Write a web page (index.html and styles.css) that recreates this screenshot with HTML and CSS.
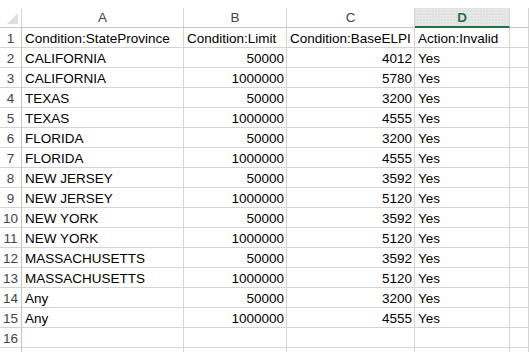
FILE: index.html
```html
<!DOCTYPE html>
<html>
<head>
    <title>Rules sheet</title>
    <link rel="stylesheet" href="styles.css">
</head>
<body>
    <div class="sheet">
        <div class="corner"></div>
        <div class="colHead">A</div>
        <div class="colHead">B</div>
        <div class="colHead">C</div>
        <div class="colHead selected">D</div>
        <div class="colHead"></div>

        <div class="rowHead">1</div>
        <div class="cell">Condition:StateProvince</div>
        <div class="cell">Condition:Limit</div>
        <div class="cell">Condition:BaseELPI</div>
        <div class="cell">Action:Invalid</div>
        <div class="cell"></div>

        <div class="rowHead">2</div>
        <div class="cell">CALIFORNIA</div>
        <div class="cell num">50000</div>
        <div class="cell num">4012</div>
        <div class="cell">Yes</div>
        <div class="cell"></div>

        <div class="rowHead">3</div>
        <div class="cell">CALIFORNIA</div>
        <div class="cell num">1000000</div>
        <div class="cell num">5780</div>
        <div class="cell">Yes</div>
        <div class="cell"></div>

        <div class="rowHead">4</div>
        <div class="cell">TEXAS</div>
        <div class="cell num">50000</div>
        <div class="cell num">3200</div>
        <div class="cell">Yes</div>
        <div class="cell"></div>

        <div class="rowHead">5</div>
        <div class="cell">TEXAS</div>
        <div class="cell num">1000000</div>
        <div class="cell num">4555</div>
        <div class="cell">Yes</div>
        <div class="cell"></div>

        <div class="rowHead">6</div>
        <div class="cell">FLORIDA</div>
        <div class="cell num">50000</div>
        <div class="cell num">3200</div>
        <div class="cell">Yes</div>
        <div class="cell"></div>

        <div class="rowHead">7</div>
        <div class="cell">FLORIDA</div>
        <div class="cell num">1000000</div>
        <div class="cell num">4555</div>
        <div class="cell">Yes</div>
        <div class="cell"></div>

        <div class="rowHead">8</div>
        <div class="cell">NEW JERSEY</div>
        <div class="cell num">50000</div>
        <div class="cell num">3592</div>
        <div class="cell">Yes</div>
        <div class="cell"></div>

        <div class="rowHead">9</div>
        <div class="cell">NEW JERSEY</div>
        <div class="cell num">1000000</div>
        <div class="cell num">5120</div>
        <div class="cell">Yes</div>
        <div class="cell"></div>

        <div class="rowHead">10</div>
        <div class="cell">NEW YORK</div>
        <div class="cell num">50000</div>
        <div class="cell num">3592</div>
        <div class="cell">Yes</div>
        <div class="cell"></div>

        <div class="rowHead">11</div>
        <div class="cell">NEW YORK</div>
        <div class="cell num">1000000</div>
        <div class="cell num">5120</div>
        <div class="cell">Yes</div>
        <div class="cell"></div>

        <div class="rowHead">12</div>
        <div class="cell">MASSACHUSETTS</div>
        <div class="cell num">50000</div>
        <div class="cell num">3592</div>
        <div class="cell">Yes</div>
        <div class="cell"></div>

        <div class="rowHead">13</div>
        <div class="cell">MASSACHUSETTS</div>
        <div class="cell num">1000000</div>
        <div class="cell num">5120</div>
        <div class="cell">Yes</div>
        <div class="cell"></div>

        <div class="rowHead">14</div>
        <div class="cell">Any</div>
        <div class="cell num">50000</div>
        <div class="cell num">3200</div>
        <div class="cell">Yes</div>
        <div class="cell"></div>

        <div class="rowHead">15</div>
        <div class="cell">Any</div>
        <div class="cell num">1000000</div>
        <div class="cell num">4555</div>
        <div class="cell">Yes</div>
        <div class="cell"></div>

        <div class="rowHead">16</div>
        <div class="cell"></div>
        <div class="cell"></div>
        <div class="cell"></div>
        <div class="cell"></div>
        <div class="cell"></div>

        <div class="rowHead"></div>
        <div class="cell"></div>
        <div class="cell"></div>
        <div class="cell"></div>
        <div class="cell"></div>
        <div class="cell"></div>
    </div>
</body>
</html>
```

FILE: styles.css
```css
* {
    box-sizing: border-box;
}
body {
    margin: 0;
    padding-top: 8px;
    background: white;
    font-family: "Liberation Sans", Arial, sans-serif;
    font-size: 13.5px;
    overflow: hidden;
}
.sheet {
    display: grid;
    grid-template-columns: 22px 162px 103px 128px 95px 1fr;
    grid-auto-rows: 20px;
}
.corner, .colHead, .rowHead {
    color: #444;
    background: white;
}
.corner {
    border-right: 1px solid #d4d4d4;
    border-bottom: 1px solid #c6c6c6;
    position: relative;
}
.corner::after {
    content: "";
    position: absolute;
    right: 3px;
    bottom: 3px;
    width: 0;
    height: 0;
    border-left: 11px solid transparent;
    border-bottom: 11px solid #dfdfdf;
}
.colHead {
    text-align: center;
    line-height: 20px;
    border-right: 1px solid #d4d4d4;
    border-bottom: 1px solid #c6c6c6;
}
.colHead.selected {
    color: #217346;
    font-weight: bold;
    background-color: #e3e3e3;
    background-image: radial-gradient(#f2f2f2 0.6px, transparent 0.8px);
    background-size: 3px 3px;
    border-bottom: 2px solid #217346;
    line-height: 19px;
}
.rowHead {
    text-align: center;
    line-height: 21px;
    border-right: 1px solid #c6c6c6;
    border-bottom: 1px solid #d4d4d4;
}
.cell {
    padding: 0 3px;
    line-height: 21px;
    color: #000;
    white-space: nowrap;
    overflow: hidden;
    border-right: 1px solid #d4d4d4;
    border-bottom: 1px solid #d4d4d4;
}
.num {
    text-align: right;
    padding-right: 2px;
}
```
